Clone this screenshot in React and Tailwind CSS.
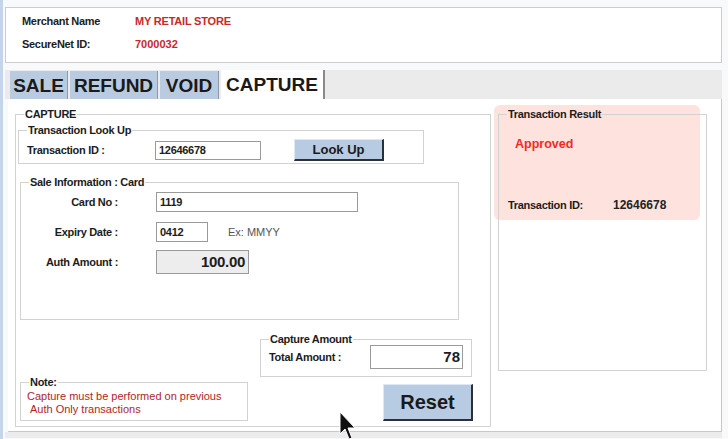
import React from 'react';

const label = "text-[11px] leading-[13px] font-bold tracking-[-0.3px] text-[#1c1c1c]";
const box = "border border-[#9a9a9a] bg-white flex items-center";

function Group({ title, className, children }) {
  return (
    <fieldset className={`border border-[#d2d2d2] ${className}`}>
      <legend className={`ml-[8px] px-[1px] ${label}`}>{title}</legend>
      {children}
    </fieldset>
  );
}

function BlueButton({ children, className }) {
  return (
    <div
      className={`flex items-center justify-center bg-[#b7cbe3] border border-t-[#dfe8f3] border-l-[#dfe8f3] border-r-2 border-b-2 border-r-[#2b2f36] border-b-[#2b2f36] font-bold text-[#1a1a1a] ${className}`}
    >
      {children}
    </div>
  );
}

export default function App() {
  const tabs = [
    { name: 'SALE', w: 'w-[58px]' },
    { name: 'REFUND', w: 'w-[88px]' },
    { name: 'VOID', w: 'w-[59px]' },
  ];

  return (
    <div className="relative w-[728px] h-[439px] overflow-hidden bg-[#f8f9fb] border-l-[3px] border-[#c3d5ea] font-['Liberation_Sans',Arial,sans-serif] text-[#1c1c1c]">
      {/* merchant header */}
      <div className="ml-[2px] mt-[7px] w-[717px] h-[56px] border border-[#cdcdcd] bg-white pl-[16px] pt-[2px]">
        <div className="flex items-center h-[23px]">
          <span className={`w-[113px] ${label}`}>Merchant Name</span>
          <span className="text-[11px] font-bold text-[#c8282c] tracking-[-0.2px]">MY RETAIL STORE</span>
        </div>
        <div className="flex items-center h-[23px]">
          <span className={`w-[113px] ${label}`}>SecureNet ID:</span>
          <span className="text-[11px] font-bold text-[#c8282c]">7000032</span>
        </div>
      </div>

      {/* tab strip */}
      <div className="ml-[2px] mt-[7px] w-[717px] h-[29px] bg-[#ebebeb] flex items-end pl-[5px] gap-[2px]">
        {tabs.map((t) => (
          <div
            key={t.name}
            className={`${t.w} h-[28px] pt-[2px] bg-[#b9cbe0] border-r border-[#8d9aab] flex items-center justify-center text-[19px] font-bold text-[#1a1a1a]`}
          >
            {t.name}
          </div>
        ))}
        <div className="w-[104px] h-[29px] pt-[2px] bg-white border-r-2 border-[#8a8a8a] flex items-center justify-center text-[19px] font-bold text-[#1a1a1a]">
          CAPTURE
        </div>
      </div>

      {/* tab page */}
      <div className="relative ml-[5px] w-[714px] h-[333px] bg-white border-b border-r border-[#c8c8c8] flex items-start">
        {/* highlight behind result panel */}
        <div className="absolute z-0 left-[486px] top-[6px] w-[206px] h-[115px] rounded-[6px] bg-[#fde2dd]" />

        <Group title="CAPTURE" className="relative z-[1] ml-[7px] mt-[9px] w-[476px] h-[319px]">
          <Group title="Transaction Look Up" className="ml-[2px] mt-[3px] w-[406px] h-[40px]">
            <div className="flex items-center h-[24px] mt-[1px] pl-[8px]">
              <span className={`w-[128px] ${label}`}>Transaction ID :</span>
              <div className={`${box} w-[106px] h-[19px] pl-[3px] ${label}`}>12646678</div>
              <BlueButton className="ml-[33px] w-[90px] h-[22px] text-[13px]">Look Up</BlueButton>
            </div>
          </Group>

          <Group title="Sale Information : Card" className="ml-[4px] mt-[12px] w-[439px] h-[144px]">
            <div className="flex items-center mt-[3px] h-[20px]">
              <span className={`w-[97px] text-right ${label}`}>Card No :</span>
              <div className={`${box} ml-[38px] w-[202px] h-[20px] pl-[3px] ${label}`}>1119</div>
            </div>
            <div className="flex items-center mt-[10px] h-[20px]">
              <span className={`w-[97px] text-right ${label}`}>Expiry Date :</span>
              <div className={`${box} ml-[38px] w-[52px] h-[20px] pl-[3px] ${label}`}>0412</div>
              <span className="ml-[20px] text-[11px] text-[#555]">Ex: MMYY</span>
            </div>
            <div className="flex items-center mt-[8px] h-[24px]">
              <span className={`w-[97px] text-right ${label}`}>Auth Amount :</span>
              <div className="ml-[38px] w-[93px] h-[24px] border border-[#9a9a9a] bg-[#ededed] flex items-center justify-end pr-[3px] text-[15px] font-bold tracking-[-0.3px]">
                100.00
              </div>
            </div>
          </Group>

          <div className="flex items-end mt-[13px]">
            <Group title="Note:" className="ml-[4px] w-[228px] h-[45px]">
              <div className="pl-[6px] mt-[1px] text-[11px] leading-[13px] text-[#b0262a]">
                <div>Capture must be performed on previous</div>
                <div className="pl-[3px]">Auth Only transactions</div>
              </div>
            </Group>
            <div className="ml-[12px] w-[213px] flex flex-col">
              <Group title="Capture Amount" className="w-[212px] h-[44px]">
                <div className="flex items-center h-[24px] -mt-[1px] pl-[8px]">
                  <span className={`w-[101px] ${label}`}>Total Amount :</span>
                  <div className={`${box} w-[93px] h-[24px] justify-end pr-[2px] text-[15px] font-bold`}>78</div>
                </div>
              </Group>
              <BlueButton className="self-end mt-[7px] w-[90px] h-[37px] text-[20px]">Reset</BlueButton>
            </div>
          </div>
        </Group>

        <Group title="Transaction Result" className="relative z-[1] ml-[7px] mt-[9px] w-[209px] h-[263px]">
          <div className="pl-[16px] mt-[15px] h-[16px] flex items-center text-[12.5px] font-bold text-[#f42a22]">Approved</div>
          <div className="pl-[9px] mt-[46px] h-[14px] flex items-center">
            <span className={`w-[105px] ${label}`}>Transaction ID:</span>
            <span className="text-[12px] font-bold text-[#222]">12646678</span>
          </div>
        </Group>

        {/* mouse cursor */}
        <svg className="absolute z-[2] left-[330px] top-[312px]" width="20" height="30" viewBox="0 0 20 30">
          <path d="M2 1 L2 23 L7 18 L11 28 L14 27 L10 17 L17 17 Z" fill="#111" stroke="#fff" strokeWidth="1" />
        </svg>
      </div>

      <div className="ml-[2px] w-[717px] h-[6px] bg-[#ececec]" />
    </div>
  );
}
